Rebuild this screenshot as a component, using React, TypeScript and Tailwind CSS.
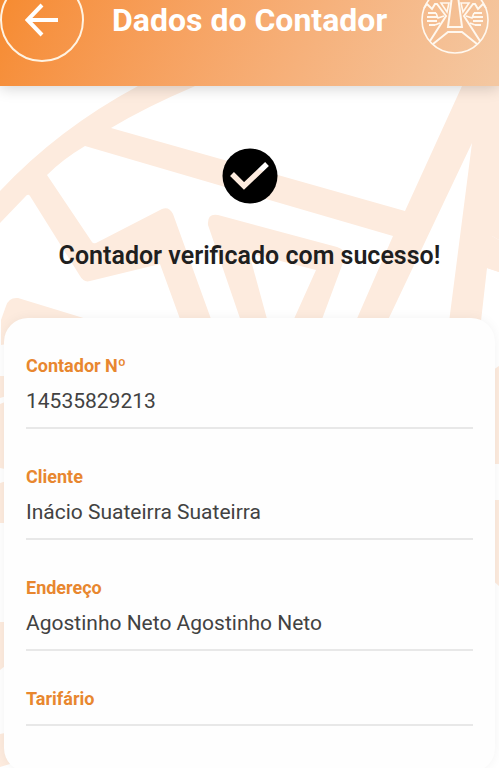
import React from "react";

type Field = { label: string; value?: string };

const fields: Field[] = [
  { label: "Contador Nº", value: "14535829213" },
  { label: "Cliente", value: "Inácio Suateirra Suateirra" },
  { label: "Endereço", value: "Agostinho Neto Agostinho Neto" },
  { label: "Tarifário" },
];

/* Enlarged pale emblem behind the page content */
function Watermark() {
  return (
    <svg
      aria-hidden="true"
      viewBox="0 0 499 768"
      preserveAspectRatio="xMidYMin slice"
      className="absolute inset-0 h-full w-full"
      fill="#fdebde"
    >
      <path d="M0 191 Q58 129 138 86 L155 76 H215 L193 87 Q146 107 111 128 L405 211 L462 86 L470 70 H499 V240 L492 236 L499 272 L487 268 L480 330 H448 L472 143 L388 320 L352 330 L393 236 L85 146 Q63 159 47 175 L92 242 Q93 244 96 243 L162 209 Q169 206 173 214 L215 330 H184 L160 264 L90 281 Q84 283 80 276 L30 196 Q28 193 25 197 L0 223Z" />
      <path d="M492 236 L499 240 V272 L487 268Z" />
      <path d="M244 330 L208 225 Q207 213 218 215 L337 247 Q347 250 344 260 L318 330 H289 L316 270 L249 253 L270 330Z" />
      <path d="M1 345 V320 L6 306 Q9 297 18 298 L90 320 V330Z" />
      <path d="M0 376 H10 V395 L0 398Z M0 404 L10 400 V470 L0 468Z M0 483 L10 480 V523 H0Z M0 622 H10 V662 L0 670Z M0 734 L10 732 V764 L0 767Z" />
      <path d="M490 372 L499 366 V464 H490Z M490 500 H499 V586 L490 578Z" />
    </svg>
  );
}

function Emblem() {
  return (
    <svg
      role="img"
      aria-label="Emblema"
      viewBox="0 0 68 68"
      className="ml-auto h-[68px] w-[68px] shrink-0"
      fill="none"
      stroke="#fff8ef"
      strokeWidth="1.6"
    >
      <circle cx="34" cy="34" r="33" />
      <path strokeWidth="2" d="M31 10 L27 41 H41 L37 10" />
      <path strokeWidth="2" d="M12 58 L27 46 H41 L56 58" />
      <path strokeWidth="2" d="M9 55 L25 30 L16 18 H14 L11 23 L6 18 L3 22" />
      <path strokeWidth="2" d="M59 55 L43 30 L52 18 H54 L57 23 L62 18 L65 22" />
      <path d="M20 17 H28 L26 26Z M48 17 H40 L42 26Z" />
      <path strokeWidth="2" d="M7 27 H15 M6 31 H16 M6 35 H16 M8 39 H14 M61 27 H53 M62 31 H52 M62 35 H52 M60 39 H54" />
      <path d="M15 27 L17 32 L23 30 M14 39 L19 37 M53 27 L51 32 L45 30 M54 39 L49 37" />
    </svg>
  );
}

function Header() {
  return (
    <header className="relative flex h-[86px] flex-col justify-end overflow-hidden bg-linear-115 from-[#f68b30] to-[#f4c8a2] pb-6">
      <div className="flex shrink-0 items-center pr-2.5">
        <button
          type="button"
          aria-label="Voltar"
          className="flex h-[84px] w-[84px] shrink-0 items-center justify-center rounded-full border-2 border-[#fff3e2] text-white"
        >
          <svg viewBox="0 0 34 34" className="h-[34px] w-[34px]" fill="none" stroke="currentColor" strokeWidth="4">
            <path d="M33 17 H3 M17 2 L2.500 17 L17 32" />
          </svg>
        </button>
        <h1 className="ml-7 text-[32px] leading-10 font-bold whitespace-nowrap text-white">Dados do Contador</h1>
        <Emblem />
      </div>
    </header>
  );
}

export default function App() {
  return (
    <div className="relative h-screen overflow-hidden bg-white font-['Roboto','Liberation_Sans',sans-serif]">
      <Watermark />
      <div className="relative">
        <div className="shadow-[0_2px_14px_rgba(0,0,0,0.18)]">
          <Header />
        </div>
        <main>
          <section className="flex flex-col items-center pt-[62px] pb-[46px]">
            <svg aria-hidden="true" viewBox="0 0 56 56" className="h-14 w-14">
              <mask id="tick-cutout">
                <rect width="56" height="56" fill="white" />
                <path d="M10 26 L22 38 L45 16" fill="none" stroke="black" strokeWidth="5.500" />
              </mask>
              <circle cx="28" cy="28" r="27.500" mask="url(#tick-cutout)" />
            </svg>
            <h2 className="mt-9 text-[25px] leading-8 font-semibold text-[#1f1f1f]">
              Contador verificado com sucesso!
            </h2>
          </section>
          <dl className="mx-1 rounded-3xl bg-[#fefefe] px-[22px] pt-9 pb-[46px] shadow-[0_0_12px_rgba(0,0,0,0.05)]">
            {fields.map((field) => (
              <div key={field.label} className="mb-9 border-b-2 border-[#e8e8e8] last:mb-0">
                <dt className="text-lg leading-6 font-bold text-[#e8872f]">{field.label}</dt>
                <dd className={field.value ? "pt-[9px] pb-3 text-[21px] leading-7 text-[#424242]" : "h-[13px]"}>
                  {field.value}
                </dd>
              </div>
            ))}
          </dl>
        </main>
      </div>
    </div>
  );
}
